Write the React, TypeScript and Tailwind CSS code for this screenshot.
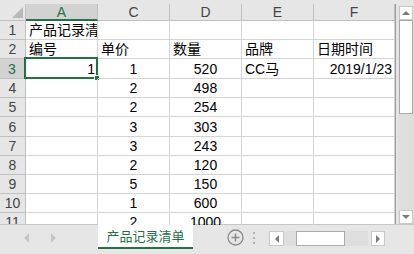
import React from 'react';

const font = "font-['Liberation_Sans','Noto_Sans_CJK_SC',sans-serif]";

const rowHeights = [19, 19, 20, 19, 19, 20, 19, 19, 19, 19, 19];

type Cell = { text?: string; align?: 'left' | 'center' | 'right' };

const rows: Cell[][] = [
  [{ text: '产品记录清单' }, {}, {}, {}, {}],
  [{ text: '编号' }, { text: '单价' }, { text: '数量' }, { text: '品牌' }, { text: '日期时间' }],
  [
    { text: '1', align: 'right' },
    { text: '1', align: 'center' },
    { text: '520', align: 'center' },
    { text: 'CC马' },
    { text: '2019/1/23', align: 'right' },
  ],
  ...[
    ['2', '498'],
    ['2', '254'],
    ['3', '303'],
    ['3', '243'],
    ['2', '120'],
    ['5', '150'],
    ['1', '600'],
    ['2', '1000'],
  ].map(([c, d]) => [
    {},
    { text: c, align: 'center' as const },
    { text: d, align: 'center' as const },
    {},
    {},
  ]),
];

const colWidths = ['w-[72px]', 'w-[72px]', 'w-[72px]', 'w-[72px]', 'w-[81px]'];
const colNames = ['A', 'C', 'D', 'E', 'F'];

const alignCls = {
  left: 'justify-start pl-[3px]',
  center: 'justify-center',
  right: 'justify-end pr-[2px]',
};

function Arrow({ dir, color = '#7a7a7a', size = 6 }: { dir: 'up' | 'down' | 'left' | 'right'; color?: string; size?: number }) {
  const pts = {
    up: '0,6 6,0 12,6',
    down: '0,0 12,0 6,6',
    left: '6,0 6,12 0,6',
    right: '0,0 0,12 6,6',
  }[dir];
  const vb = dir === 'up' || dir === 'down' ? '0 0 12 6' : '0 0 6 12';
  const w = dir === 'up' || dir === 'down' ? size * 2 : size;
  const h = dir === 'up' || dir === 'down' ? size : size * 2;
  return (
    <svg width={w} height={h} viewBox={vb}>
      <polygon points={pts} fill={color} />
    </svg>
  );
}

export default function App() {
  return (
    <div className={`w-[414px] h-[254px] overflow-hidden bg-[#e6e6e6] flex flex-col ${font}`}>
      <div className="h-[4px] shrink-0" />
      <div className="flex h-[221px] shrink-0">
        {/* grid */}
        <div className="w-[395px] h-[221px] flex flex-col bg-white overflow-hidden border-r border-[#9b9b9b] box-content">
          <div className="flex h-[17px] shrink-0 bg-[#e6e6e6]">
            <div className="w-[26px] h-full border-r border-b border-[#c0c0c0] flex items-end justify-end p-[2px]">
              <svg width="11" height="11" viewBox="0 0 11 11">
                <polygon points="11,0 11,11 0,11" fill="#b8b8b8" />
              </svg>
            </div>
            {colNames.map((n, i) => (
              <div
                key={n}
                className={`${colWidths[i]} h-full flex items-center justify-center text-[14px] leading-none border-r ${
                  i === 0
                    ? 'bg-[#d2d2d2] text-[#217346] border-b-2 border-b-[#217346] border-r-[#c0c0c0]'
                    : 'text-[#444] border-b border-[#c0c0c0]'
                }`}
              >
                {n}
              </div>
            ))}
          </div>
          {rows.map((row, r) => (
            <div key={r} className="flex shrink-0" style={{ height: rowHeights[r] }}>
              <div
                className={`w-[26px] h-full flex items-center justify-center text-[14px] leading-none border-b border-[#c0c0c0] ${
                  r === 2
                    ? 'bg-[#d2d2d2] text-[#217346] border-r-2 border-r-[#217346]'
                    : 'bg-[#e6e6e6] text-[#444] border-r border-r-[#c0c0c0]'
                }`}
              >
                {r + 1}
              </div>
              {row.map((cell, c) => (
                <div
                  key={c}
                  className={`${colWidths[c]} h-full relative flex items-end pb-[1px] text-[14px] leading-[16px] text-black border-r border-b border-[#d4d4d4] whitespace-nowrap ${
                    alignCls[cell.align ?? 'left']
                  } ${r === 0 && c === 0 ? 'overflow-hidden' : ''}`}
                >
                  {cell.text}
                  {r === 2 && c === 0 && (
                    <>
                      <div className="absolute -left-[2px] -top-[2px] -right-[1px] -bottom-[1px] border-2 border-[#217346]" />
                      <div className="absolute -right-[3px] -bottom-[3px] w-[6px] h-[6px] bg-[#217346] border border-white" />
                    </>
                  )}
                </div>
              ))}
            </div>
          ))}
        </div>
        {/* vertical scrollbar */}
        <div className="ml-[2px] mt-[2px] w-[16px] h-[219px] flex flex-col bg-[#dedede]">
          <div className="h-[14px] mx-[1px] bg-white border border-[#c8c8c8] flex items-center justify-center">
            <Arrow dir="up" size={4} />
          </div>
          <div className="h-[94px] mx-[1px] bg-white border border-[#ababab]" />
          <div className="flex-1" />
          <div className="h-[14px] mx-[1px] mb-[1px] bg-white border border-[#c8c8c8] flex items-center justify-center">
            <Arrow dir="down" size={4} />
          </div>
        </div>
      </div>
      {/* tab bar */}
      <div className="flex h-[29px] shrink-0 border-t border-[#c6c6c6] box-content -mt-px">
        <div className="w-[98px] flex items-center pl-[24px] gap-[22px] pb-[4px]">
          <Arrow dir="left" color="#c6c6c6" size={5} />
          <Arrow dir="right" color="#c6c6c6" size={5} />
        </div>
        <div className="w-[95px] h-[25px] -mt-px pt-[2px] bg-white border-b-2 border-[#217346] flex items-center justify-center text-[13px] text-[#217346]">
          产品记录清单
        </div>
        <div className="w-[34px]" />
        <div className="flex items-center pb-[4px]">
          <svg width="17" height="17" viewBox="0 0 17 17">
            <circle cx="8.5" cy="8.5" r="7.5" fill="none" stroke="#8a8a8a" strokeWidth="1.3" />
            <path d="M8.5 4.5v8M4.5 8.5h8" stroke="#8a8a8a" strokeWidth="1.5" />
          </svg>
        </div>
        <div className="w-[19px] flex items-center justify-center pb-[4px]">
          <div className="flex flex-col gap-[3px]">
            <div className="w-[2px] h-[2px] bg-[#b0b0b0]" />
            <div className="w-[2px] h-[2px] bg-[#b0b0b0]" />
            <div className="w-[2px] h-[2px] bg-[#b0b0b0]" />
          </div>
        </div>
        <div className="ml-[6px] mt-[6px] flex h-[15px]">
          <div className="w-[15px] h-full bg-white border border-[#c8c8c8] flex items-center justify-center">
            <Arrow dir="left" size={4} />
          </div>
          <div className="w-[84px] h-full bg-[#dedede] flex items-center pl-[12px]">
            <div className="w-[49px] h-full bg-white border border-[#ababab]" />
          </div>
          <div className="w-[3px]" />
          <div className="w-[14px] h-full bg-white border border-[#c8c8c8] flex items-center justify-center">
            <Arrow dir="right" size={4} />
          </div>
        </div>
      </div>
    </div>
  );
}
